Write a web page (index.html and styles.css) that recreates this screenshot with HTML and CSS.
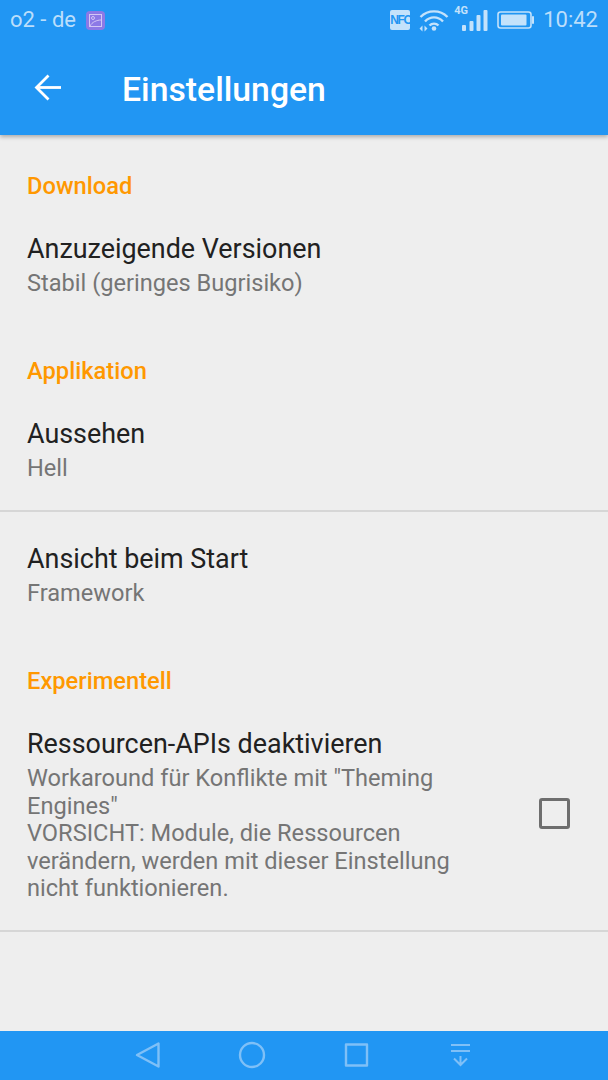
FILE: index.html
```html
<!DOCTYPE html>
<html lang="de">
<head>
<meta charset="utf-8">
<title>Einstellungen</title>
<link rel="stylesheet" href="styles.css">
</head>
<body>
<div class="screen">
  <header class="header">
    <div class="status">
      <div class="status-left">
        <span class="carrier">o2 - de</span>
        <span class="pic-badge">
          <svg width="13" height="13" viewBox="0 0 13 13" fill="none" stroke="#d3c6f6" stroke-width="1"><rect x="0.500" y="0.500" width="12" height="12"/><circle cx="4" cy="4" r="1.500"/><path d="M1 12C3 8 8 6 12 6"/></svg>
        </span>
      </div>
      <div class="status-right">
        <span class="nfc">NFC</span>
        <svg class="wifi" width="30" height="24" viewBox="0 0 30 24" fill="none" stroke="#c4e2fb" stroke-width="2.400"><path d="M1.500 9C9 1.500 21 1.500 28.500 9"/><path d="M6 13.500C11 8 19 8 24 13.500"/><path d="M10.500 17.500C13 15 17 15 19.500 17.500"/><circle cx="15" cy="20.500" r="2.300" fill="#c4e2fb" stroke="none"/><path d="M3.500 17.500L0.500 20.500L3.500 23.500ZM5.500 17.500L8.500 20.500L5.500 23.500Z" stroke="none" fill="#c4e2fb"/></svg>
        <span class="signal">
          <span class="net">4G</span>
          <svg width="26" height="24" viewBox="0 0 26 24" fill="#c4e2fb"><rect x="0" y="17" width="4" height="6" rx="1"/><rect x="7.500" y="13" width="4" height="10" rx="1"/><rect x="14.500" y="7" width="4" height="16" rx="1"/><rect x="21.500" y="2" width="4" height="21" rx="1"/></svg>
        </span>
        <svg class="battery" width="38" height="20" viewBox="0 0 38 20" fill="none"><rect x="1" y="2" width="33" height="16" rx="2.500" stroke="#c4e2fb" stroke-width="1.600"/><rect x="4" y="4.500" width="25.500" height="11" rx="1" fill="#c4e2fb"/><rect x="35" y="6" width="2" height="8" rx="1" fill="#c4e2fb"/></svg>
        <span class="clock">10:42</span>
      </div>
    </div>
    <div class="toolbar">
      <svg class="back" width="30" height="30" viewBox="0 0 30 30" fill="none" stroke="#fff" stroke-width="2.800"><path d="M28 14.500H4"/><path d="M15.500 2.500L3.500 14.500L15.500 26.500"/></svg>
      <h1 class="title">Einstellungen</h1>
    </div>
  </header>

  <main class="list">
    <div class="category">Download</div>
    <div class="item">
      <div class="item-text">
        <div class="item-title">Anzuzeigende Versionen</div>
        <div class="item-summary">Stabil (geringes Bugrisiko)</div>
      </div>
    </div>

    <div class="category">Applikation</div>
    <div class="item">
      <div class="item-text">
        <div class="item-title">Aussehen</div>
        <div class="item-summary">Hell</div>
      </div>
    </div>
    <div class="divider"></div>
    <div class="item">
      <div class="item-text">
        <div class="item-title">Ansicht beim Start</div>
        <div class="item-summary">Framework</div>
      </div>
    </div>

    <div class="category">Experimentell</div>
    <div class="item item-check">
      <div class="item-text item-text-narrow">
        <div class="item-title">Ressourcen-APIs deaktivieren</div>
        <div class="item-summary">Workaround für Konflikte mit "Theming Engines"<br>VORSICHT: Module, die Ressourcen verändern, werden mit dieser Einstellung nicht funktionieren.</div>
      </div>
      <span class="checkbox"></span>
    </div>
    <div class="divider"></div>
  </main>

  <nav class="nav">
    <svg width="28" height="28" viewBox="0 0 28 28" fill="none" stroke="#7fc0f7" stroke-width="2.400" stroke-linejoin="round"><path d="M24.500 2.500V25.500L3 14Z"/></svg>
    <svg width="28" height="28" viewBox="0 0 28 28" fill="none" stroke="#7fc0f7" stroke-width="2.400"><circle cx="14" cy="14" r="12"/></svg>
    <svg width="28" height="28" viewBox="0 0 28 28" fill="none" stroke="#7fc0f7" stroke-width="2.400" stroke-linejoin="round"><rect x="4" y="3.500" width="21" height="21"/></svg>
    <svg width="28" height="28" viewBox="0 0 28 28" fill="none" stroke="#7fc0f7" stroke-width="2"><path d="M5 4H24M5 10H24M14.500 15V24.500M8 17.500L14.500 24L21 17.500"/></svg>
  </nav>
</div>
</body>
</html>
```
FILE: styles.css
```css
* { box-sizing: border-box; }
html, body { margin: 0; padding: 0; }
body { width: 608px; height: 1080px; overflow: hidden; font-family: Roboto, "Liberation Sans", sans-serif; background: #eeeeee; }
.screen { display: flex; flex-direction: column; height: 1080px; background: #eeeeee; }
.header { background: #2196f3; height: 135px; flex: none; box-shadow: 0 2px 4px rgba(0, 0, 0, 0.28); position: relative; }
.status { height: 40px; display: flex; align-items: center; justify-content: space-between; padding: 0 10px; color: #bbdefb; }
.status-left, .status-right { display: flex; align-items: center; }
.carrier { font-size: 22px; line-height: 40px; }
.pic-badge { width: 19px; height: 19px; margin-left: 10px; border-radius: 4px; background: #8c79e6; display: flex; align-items: center; justify-content: center; }
.nfc { width: 20px; height: 20px; background: #c4e2fb; color: #2196f3; font-family: "Liberation Sans", sans-serif; font-size: 12px; font-weight: 700; line-height: 20px; text-align: center; letter-spacing: -1.300px; border-radius: 2px; }
.wifi { margin-left: 9px; }
.signal { display: flex; position: relative; margin-left: 13px; }
.net { position: absolute; left: -8px; top: -3px; color: #c4e2fb; font-size: 11px; font-weight: 700; line-height: 12px; }
.battery { margin-left: 9px; }
.clock { font-size: 22px; margin-left: 8px; line-height: 40px; }
.toolbar { height: 95px; display: flex; align-items: center; padding-left: 33px; }
.back { flex: none; margin-top: 1px; }
.title { margin: 4px 0 0 59px; color: #fff; font-size: 33.750px; font-weight: 500; line-height: 40px; }
.list { flex: 1; padding-top: 6px; }
.category { height: 61px; padding-top: 31px; color: #ff9800; font-size: 23.700px; font-weight: 500; line-height: 28px; padding-left: 27px; }
.item { padding: 31px 27px 28.500px; display: flex; align-items: center; }
.item-text { flex: 1; min-width: 0; }
.item-text-narrow { max-width: 425px; }
.item-title { color: #212121; font-size: 26.900px; line-height: 32px; }
.item-summary { color: #757575; font-size: 23.600px; line-height: 27.500px; margin-top: 5px; }
.item-check { justify-content: space-between; padding-right: 38px; }
.checkbox { flex: none; width: 31px; height: 31px; margin-bottom: 3px; border: 3.500px solid #6e6e6e; border-radius: 3px; }
.divider { height: 2px; margin-top: -1px; background: #d6d6d6; }
.nav { height: 49px; flex: none; background: #2196f3; display: flex; align-items: flex-start; padding: 10px 0 0 134px; gap: 76px; }
```
